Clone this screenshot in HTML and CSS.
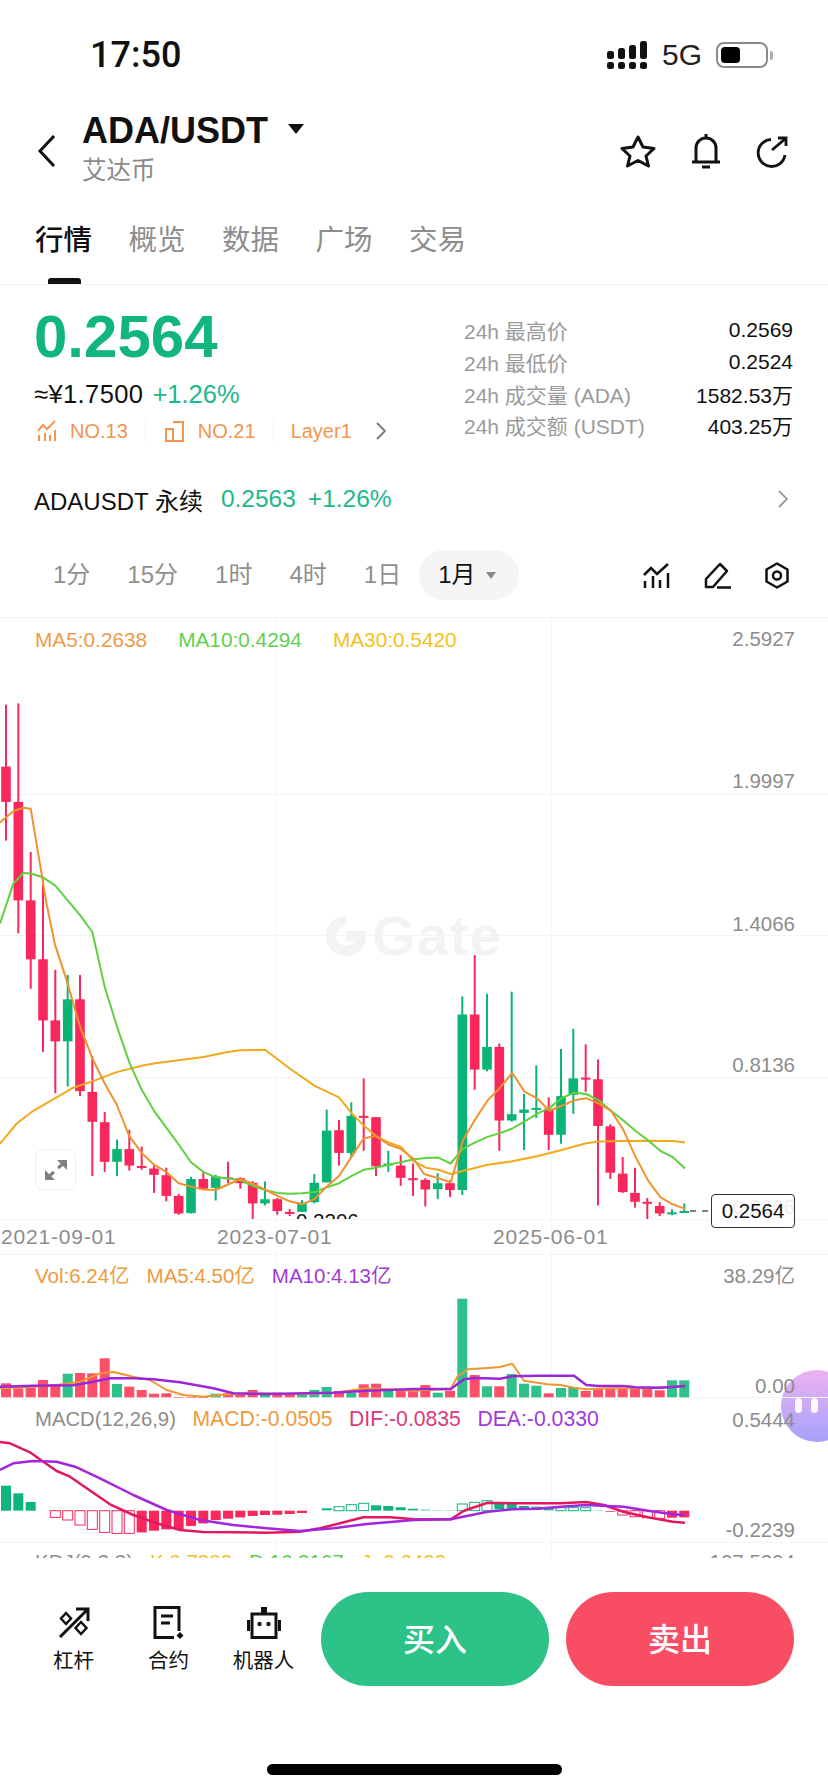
FILE: index.html
```html
<!DOCTYPE html>
<html lang="zh-CN">
<head>
    <meta charset="UTF-8">
    <meta name="viewport" content="width=device-width, initial-scale=1.0">
    <title>ADA/USDT</title>
    <link rel="stylesheet" href="styles.css">
</head>
<body>
    <div id="app">
        <div class="status">
            <span class="time">17:50</span>
            <div class="status-right">
                <svg class="signal" width="41" height="28" viewBox="0 0 41 28">
                    <rect x="0" y="21" width="7" height="7" rx="2.5"/><rect x="11" y="21" width="7" height="7" rx="2.5"/>
                    <rect x="22" y="21" width="7" height="7" rx="2.5"/><rect x="33" y="21" width="7" height="7" rx="2.5"/>
                    <rect x="0" y="10" width="7" height="8" rx="2.5"/><rect x="11" y="7" width="7" height="11" rx="2.5"/>
                    <rect x="22" y="4" width="7" height="14" rx="2.5"/><rect x="33" y="0" width="7" height="18" rx="2.5"/>
                </svg>
                <span class="net">5G</span>
                <div class="battery"><div class="battery-fill"></div></div>
                <div class="battery-nub"></div>
            </div>
        </div>

        <div class="header">
            <svg class="back" width="19" height="32" viewBox="0 0 19 32"><path d="M17 1 L3 16 L17 31" fill="none" stroke="#111" stroke-width="3"/></svg>
            <div class="title-block">
                <div class="pair"><h1>ADA/USDT</h1><span class="caret"></span></div>
                <div class="coin">艾达币</div>
            </div>
            <div class="header-icons">
                <svg width="36" height="34" viewBox="0 0 36 34"><path d="M18 3 L23 13 L34 14.500 L26 22 L28.500 32 L18 26.500 L7.500 32 L10 22 L2 14.500 L13 13 Z" fill="none" stroke="#111" stroke-width="3" stroke-linejoin="round"/></svg>
                <svg width="30" height="36" viewBox="0 0 30 36"><path d="M15 1 V5 M5 28 V15 A10 10 0 0 1 25 15 V28 M1 29 H29 M11 34 H19" fill="none" stroke="#111" stroke-width="3"/></svg>
                <svg class="share" width="32" height="32" viewBox="0 0 32 32"><path d="M15 3.500 A13.500 13.500 0 1 0 29 19 M16 14 L29 3 M22 2 H30 V10" fill="none" stroke="#111" stroke-width="2.800"/></svg>
            </div>
        </div>

        <div class="tabs">
            <span class="tab active">行情</span>
            <span class="tab">概览</span>
            <span class="tab">数据</span>
            <span class="tab">广场</span>
            <span class="tab">交易</span>
        </div>

        <div class="quote">
            <div class="quote-left">
                <div class="price">0.2564</div>
                <div class="sub-price"><span class="cny">≈¥1.7500</span><span class="up">+1.26%</span></div>
                <div class="ranks">
                    <svg width="20" height="22" viewBox="0 0 20 22"><path d="M1 11 L6 5 L10 9 L18 1 M2 15 V21 M8 13 V21 M13 15 V21 M18 10 V21" fill="none" stroke="#f2954e" stroke-width="2"/></svg>
                    <span>NO.13</span>
                    <i class="rank-sep"></i>
                    <svg width="21" height="22" viewBox="0 0 21 22"><path d="M2 9 H9 V21 H2 Z M9 2 H19 V21 H9" fill="none" stroke="#f2954e" stroke-width="2"/></svg>
                    <span>NO.21</span>
                    <i class="rank-sep"></i>
                    <span class="layer">Layer1</span>
                    <svg class="rank-more" width="10" height="18" viewBox="0 0 10 18"><path d="M1 1 L9 9 L1 17" fill="none" stroke="#777" stroke-width="1.800"/></svg>
                </div>
            </div>
            <div class="stats">
                <div class="stat"><span>24h 最高价</span><b>0.2569</b></div>
                <div class="stat"><span>24h 最低价</span><b>0.2524</b></div>
                <div class="stat"><span>24h 成交量 (ADA)</span><b>1582.53万</b></div>
                <div class="stat"><span>24h 成交额 (USDT)</span><b>403.25万</b></div>
            </div>
        </div>

        <div class="perp">
            <span class="perp-name">ADAUSDT 永续</span>
            <span class="perp-num">0.2563</span>
            <span class="perp-num">+1.26%</span>
            <svg class="perp-more" width="10" height="18" viewBox="0 0 10 18"><path d="M1 1 L9 9 L1 17" fill="none" stroke="#999" stroke-width="1.800"/></svg>
        </div>

        <div class="ranges">
            <span>1分</span>
            <span>15分</span>
            <span>1时</span>
            <span>4时</span>
            <span>1日</span>
            <span class="range-on">1月<i class="range-caret"></i></span>
            <div class="tools">
                <svg width="27" height="25" viewBox="0 0 27 25"><path d="M1 12 L8 5 L14 11 L25 1 M2 18 V25 M10 13 V25 M17 17 V25 M25 10 V25" fill="none" stroke="#111" stroke-width="2.500"/></svg>
                <svg width="27" height="27" viewBox="0 0 27 27"><path d="M2 25 V17 L16 2 L23 9 L9 25 Z M13 25.500 H27" fill="none" stroke="#111" stroke-width="2.500" stroke-linejoin="round"/></svg>
                <svg width="24" height="27" viewBox="0 0 24 27"><path d="M12 1.500 L22.500 7.500 V19.500 L12 25.500 L1.500 19.500 V7.500 Z" fill="none" stroke="#111" stroke-width="2.500" stroke-linejoin="round"/><circle cx="12" cy="13.500" r="4" fill="none" stroke="#111" stroke-width="2.500"/></svg>
            </div>
        </div>

        <div class="chart">
            <div class="bubble"><i></i><i></i></div>
            <svg id="plot" width="828" height="941" viewBox="0 617 828 941"></svg>

            <div class="panel panel-main">
                <div class="legend">
                    <span class="c-orange">MA5:0.2638</span>
                    <span class="c-green">MA10:0.4294</span>
                    <span class="c-yellow">MA30:0.5420</span>
                </div>
                <div class="logo-mark">
                    <svg width="40" height="40" viewBox="0 0 40 40"><path d="M20 5 A15 15 0 1 0 35 20 H20" fill="none" stroke="#f2f3f5" stroke-width="10"/></svg>
                    <span>Gate</span>
                </div>
                <div class="expand">
                    <svg width="24" height="22" viewBox="0 0 24 22"><path d="M3 19 L10 13 M21 3 L14 9" stroke="#808080" stroke-width="3"/><path d="M1 11 V21 H11 Z M23 11 V1 H13 Z" fill="#808080"/></svg>
                </div>
                <div class="last-price">0.2564</div>
            </div>

            <div class="panel panel-vol">
                <div class="legend small">
                    <span class="c-orange2">Vol:6.24亿</span>
                    <span class="c-orange2">MA5:4.50亿</span>
                    <span class="c-purple">MA10:4.13亿</span>
                </div>
            </div>

            <div class="panel panel-macd">
                <div class="legend small macd">
                    <span class="c-grey">MACD(12,26,9)</span>
                    <span class="c-orange2">MACD:-0.0505</span>
                    <span class="c-pink">DIF:-0.0835</span>
                    <span class="c-purple">DEA:-0.0330</span>
                </div>
            </div>

            <div class="panel panel-kdj">
                <div class="legend small">
                    <span class="c-grey">KDJ(9,3,3)</span>
                    <span class="c-yellow">K:0.7382</span>
                    <span class="c-green">D:16.3167</span>
                    <span class="c-yellow">J:-9.6423</span>
                </div>
            </div>
        </div>

        <div class="trade">
            <div class="trade-row">
                <div class="trade-item">
                    <svg width="34" height="33" viewBox="0 0 34 33"><path d="M3 31 L31 3 M19 3 H31 V15" fill="none" stroke="#111" stroke-width="3"/><path d="M9 7 L14 12.500 L9 18 L4 12.500 Z M24 16 L29.500 22 L24 28 L18.500 22 Z" fill="none" stroke="#111" stroke-width="2.500"/></svg>
                    <span>杠杆</span>
                </div>
                <div class="trade-item">
                    <svg width="34" height="33" viewBox="0 0 34 33"><path d="M27 25 V1.500 H3 V31.500 H22 M9 10 H21 M9 17 H18" fill="none" stroke="#111" stroke-width="3"/><path d="M28 26 L31.500 29.500 L28 33 L24.500 29.500 Z" fill="#111"/></svg>
                    <span>合约</span>
                </div>
                <div class="trade-item">
                    <svg width="36" height="33" viewBox="0 0 36 33"><path d="M6 8 H30 V31.500 H6 Z" fill="none" stroke="#111" stroke-width="3"/><path d="M15 1 H21 V7 H15 Z M1 14 H4 V25 H1 Z M32 14 H35 V25 H32 Z" fill="#111"/><circle cx="13.500" cy="18" r="2.200" fill="#111"/><circle cx="22.500" cy="18" r="2.200" fill="#111"/></svg>
                    <span>机器人</span>
                </div>
                <button class="btn buy">买入</button>
                <button class="btn sell">卖出</button>
            </div>
            <div class="home-bar"></div>
        </div>
    </div>
    <script src="chart.js"></script>
</body>
</html>
```

FILE: styles.css
```css
* {
    box-sizing: border-box;
}
body {
    margin: 0;
    background: #fff;
    font-family: "Liberation Sans", "Noto Sans CJK SC", sans-serif;
    color: #111;
}
#app {
    width: 828px;
    height: 1792px;
    overflow: hidden;
}

/* status bar */
.status {
    height: 110px;
    padding: 0 55px 0 90px;
    display: flex;
    align-items: center;
    justify-content: space-between;
}
.time {
    font-family: Roboto, sans-serif;
    font-size: 36px;
    font-weight: 500;
}
.status-right {
    display: flex;
    align-items: center;
}
.signal {
    fill: #111;
}
.net {
    font-size: 30px;
    margin-left: 14px;
    color: #222;
}
.battery {
    width: 52px;
    height: 26px;
    margin-left: 14px;
    padding: 3px;
    border: 2px solid #8a8a8a;
    border-radius: 8px;
}
.battery-fill {
    width: 19px;
    height: 100%;
    background: #000;
    border-radius: 4px;
}
.battery-nub {
    width: 3px;
    height: 9px;
    margin-left: 2px;
    background: #aaa;
    border-radius: 0 3px 3px 0;
}

/* header */
.header {
    height: 76px;
    padding: 0 40px 0 37px;
    display: flex;
    align-items: center;
}
.back {
    margin: 6px 26px 0 0;
}
.title-block {
    padding-top: 4px;
}
.pair {
    display: flex;
    align-items: center;
    height: 40px;
}
.pair h1 {
    margin: 0;
    font-size: 36px;
    font-weight: 700;
}
.caret {
    width: 0;
    height: 0;
    margin: 0 0 5px 20px;
    border-left: 8px solid transparent;
    border-right: 8px solid transparent;
    border-top: 10px solid #111;
}
.coin {
    margin-top: 2px;
    font-size: 24.500px;
    line-height: 36px;
    color: #8a8a8a;
}
.header-icons {
    margin: 6px 0 0 auto;
    display: flex;
    align-items: center;
    gap: 35px;
}
.share {
    margin-top: 1px;
}

/* tabs */
.tabs {
    height: 99px;
    padding: 39px 0 0 35px;
    display: flex;
    gap: 36.500px;
    border-bottom: 1px solid #f0f0f0;
}
.tab {
    position: relative;
    height: 59px;
    font-size: 28.500px;
    line-height: 30px;
    color: #8d8d8d;
}
.tab.active {
    color: #111;
    font-weight: 500;
}
.tab.active::after {
    content: "";
    position: absolute;
    left: 12.500px;
    bottom: 0;
    width: 33px;
    height: 6px;
    background: #111;
    border-radius: 3px 3px 0 0;
}

/* price block */
.quote {
    height: 183px;
    padding: 0 35px 0 34px;
    display: flex;
    justify-content: space-between;
}
.price {
    margin-top: 22px;
    font-size: 60px;
    line-height: 60px;
    font-weight: 700;
    color: #10b57f;
}
.sub-price {
    margin-top: 12px;
    display: flex;
    gap: 9px;
    font-size: 25.500px;
    line-height: 30px;
}
.cny {
    letter-spacing: 0.400px;
}
.up {
    color: #1db988;
}
.ranks {
    margin-top: 10px;
    height: 24px;
    display: flex;
    align-items: center;
    font-size: 20px;
    color: #f2954e;
}
.ranks svg {
    margin: 0 13px 0 3px;
}
.rank-sep {
    width: 1px;
    height: 24px;
    margin: 0 15px 0 17px;
    background: #f3f3f3;
}
.layer {
    margin-left: 2px;
}
.ranks .rank-more {
    margin: 0 0 0 24px;
}
.stats {
    width: 329px;
    padding-top: 29.500px;
}
.stat {
    height: 31.700px;
    display: flex;
    align-items: center;
    justify-content: space-between;
    font-size: 21px;
    color: #9a9a9a;
}
.stat b {
    font-weight: 400;
    color: #111;
}

/* perpetual row */
.perp {
    height: 62px;
    padding: 0 40px 0 34px;
    display: flex;
    align-items: center;
    font-size: 24.500px;
}
.perp-name {
    font-size: 24px;
    margin-right: 18px;
}
.perp-num {
    margin-right: 12px;
    color: #1db988;
}
.perp-more {
    margin-left: auto;
}

/* time ranges */
.ranges {
    height: 87px;
    padding: 20px 39px 0 53px;
    display: flex;
    align-items: flex-start;
    gap: 37px;
    font-size: 24px;
    line-height: 50px;
    color: #8f8f8f;
}
.range-on {
    display: flex;
    align-items: center;
    margin-left: -19px;
    width: 100px;
    height: 50px;
    padding-left: 19px;
    background: #f5f5f5;
    border-radius: 25px;
    color: #111;
}
.range-caret {
    width: 0;
    height: 0;
    margin-left: 10px;
    border-left: 5px solid transparent;
    border-right: 5px solid transparent;
    border-top: 7px solid #888;
}
.tools {
    margin-left: auto;
    height: 50px;
    display: flex;
    align-items: center;
    gap: 34px;
}

/* chart area */
.chart {
    position: relative;
    height: 941px;
    overflow: hidden;
    border-top: 1px solid #f2f2f2;
}
#plot {
    position: absolute;
    left: 0;
    top: -1px;
}
.panel {
    position: relative;
}
.panel-main {
    height: 636px;
}
.panel-vol {
    height: 143px;
}
.panel-macd {
    height: 145px;
}
.panel-kdj {
    margin-top: -2px;
}
.legend {
    padding: 10px 0 0 35px;
    display: flex;
    gap: 31px;
    font-size: 20.800px;
    line-height: 24px;
}
.legend.small {
    gap: 17px;
    font-size: 20.500px;
}
.legend.macd {
    font-size: 21.200px;
    gap: 16.500px;
}
.macd .c-grey {
    font-size: 20.300px;
}
.c-orange { color: #ef9a4a; }
.c-orange2 { color: #ee9a3e; }
.c-green { color: #5fd04e; }
.c-yellow { color: #f3c11d; }
.c-purple { color: #a03adb; }
.c-pink { color: #d93a7a; }
.c-grey { color: #8c8c8c; }

.logo-mark {
    position: absolute;
    left: 326px;
    top: 298px;
    display: flex;
    align-items: center;
    gap: 6px;
    font-size: 56px;
    letter-spacing: 1.500px;
    line-height: 40px;
    font-weight: 700;
    color: #f2f3f5;
}
.expand {
    position: absolute;
    left: 35px;
    top: 531px;
    width: 41px;
    height: 41px;
    display: flex;
    align-items: center;
    justify-content: center;
    background: #fff;
    border: 1px solid #f0f0f0;
    border-radius: 7px;
}
.last-price {
    position: absolute;
    left: 711px;
    top: 576px;
    width: 84px;
    height: 34px;
    background: rgba(255, 255, 255, 0.85);
    border: 1px solid #333;
    border-radius: 4px;
    font-size: 20.500px;
    line-height: 32px;
    text-align: center;
}
.bubble {
    position: absolute;
    left: 781px;
    top: 752px;
    width: 72px;
    height: 72px;
    padding: 28px 0 0 14px;
    display: flex;
    gap: 9px;
    border-radius: 50%;
    background: linear-gradient(#ecb2ef, #a6a2fb);
}
.bubble i {
    width: 7px;
    height: 15px;
    background: #fff;
    border-radius: 4px;
    opacity: 0.9;
}

/* svg text */
.axis {
    font-size: 20.500px;
    fill: #8c8c8c;
    text-anchor: end;
}
.date {
    font-size: 21px;
    letter-spacing: 0.800px;
    fill: #8c8c8c;
}
.low {
    font-size: 20.500px;
    fill: #111;
}

/* order bar */
.trade {
    height: 234px;
    position: relative;
    background: #fff;
    padding-top: 34px;
}
.trade-row {
    height: 94px;
    padding-left: 26px;
    display: flex;
}
.trade-item {
    width: 95px;
    padding-top: 14px;
    display: flex;
    flex-direction: column;
    align-items: center;
    gap: 9px;
    font-size: 20.500px;
    line-height: 26px;
}
.btn {
    width: 228px;
    height: 94px;
    padding: 0 0 4px;
    border: 0;
    border-radius: 47px;
    font-family: inherit;
    font-size: 32px;
    font-weight: 500;
    color: #fff;
}
.buy {
    margin-left: 10px;
    background: #2dc287;
}
.sell {
    margin-left: 17px;
    background: #f94d63;
}
.home-bar {
    width: 295px;
    height: 11px;
    margin: 78px auto 0;
    background: #000;
    border-radius: 6px;
}
```

FILE: chart.js
```js
const RED = "#f9275b";
const GREEN = "#0bb374";
const STEP = 37;

// candles: top of wick, bottom of wick, top of body, bottom of body, r/g
// units are thirds of a pixel across, 2.376 per pixel down, from y=610
const candles = [
    [225,548,372,456,"r"],[222,768,456,690,"r"],[575,900,690,830,"r"],[640,1050,830,975,"r"],
    [855,1148,975,1025,"r"],[867,1132,925,1025,"g"],[867,1155,925,1143,"r"],[1060,1345,1145,1216,"r"],
    [1193,1335,1217,1311,"r"],[1258,1345,1281,1311,"g"],[1235,1332,1281,1320,"r"],[1275,1330,1321,1325,"r"],
    [1320,1385,1327,1342,"r"],[1325,1405,1343,1392,"r"],[1387,1437,1392,1434,"r"],[1347,1434,1352,1433,"g"],
    [1335,1377,1352,1375,"r"],[1342,1403,1346,1373,"g"],[1311,1362,1348,1352,"r"],[1348,1375,1350,1362,"r"],
    [1357,1447,1361,1410,"r"],[1358,1415,1400,1410,"g"],[1397,1437,1400,1428,"r"],[1423,1440,1430,1433,"r"],
    [1402,1430,1408,1430,"g"],[1340,1410,1361,1407,"g"],[1187,1360,1237,1360,"g"],[1212,1320,1236,1290,"r"],
    [1170,1302,1202,1290,"g"],[1113,1285,1202,1205,"r"],[1205,1345,1205,1322,"r"],[1285,1335,1315,1320,"g"],
    [1295,1368,1320,1349,"r"],[1315,1392,1350,1353,"r"],[1350,1417,1354,1377,"r"],[1338,1400,1362,1376,"g"],
    [1355,1395,1362,1378,"r"],[918,1390,961,1378,"g"],[820,1140,961,1092,"r"],[912,1096,1038,1092,"g"],
    [1030,1285,1038,1213,"r"],[907,1216,1198,1213,"g"],[1150,1283,1187,1195,"g"],[1082,1207,1183,1186,"g"],
    [1158,1283,1185,1247,"r"],[1043,1268,1155,1247,"g"],[995,1197,1113,1152,"g"],[1032,1145,1111,1114,"r"],
    [1068,1415,1115,1226,"r"],[1222,1352,1227,1337,"r"],[1300,1385,1339,1383,"r"],[1325,1420,1385,1406,"r"],
    [1397,1447,1406,1410,"r"],[1407,1440,1416,1434,"r"],[1424,1438,1431,1433,"g"],[1410,1432,1428,1431,"g"]
];

const ma5 = [0,505,40,478,70,470,92,472,115,580,140,700,165,795,200,880,240,990,277,1065,314,1125,350,1175,388,1250,425,1290,462,1318,499,1335,536,1362,573,1370,610,1377,647,1378,684,1365,721,1352,758,1363,795,1377,832,1392,869,1405,906,1412,943,1400,980,1370,1017,1345,1054,1300,1091,1255,1128,1250,1165,1270,1202,1280,1242,1305,1272,1340,1315,1350,1352,1360,1389,1260,1426,1210,1463,1165,1500,1135,1537,1100,1574,1145,1611,1160,1648,1190,1685,1178,1722,1165,1759,1160,1796,1172,1833,1190,1870,1235,1907,1300,1944,1355,1981,1395,2018,1412,2055,1423];
const ma10 = [0,745,40,650,70,625,92,626,129,635,166,655,203,690,240,725,277,765,314,895,351,990,388,1075,425,1140,462,1190,499,1230,536,1270,573,1312,610,1335,647,1348,684,1350,721,1355,758,1368,795,1378,832,1385,869,1387,906,1386,943,1383,980,1372,1017,1362,1054,1345,1091,1330,1128,1325,1165,1318,1202,1312,1242,1305,1278,1302,1315,1301,1352,1315,1389,1280,1426,1265,1463,1252,1500,1243,1537,1232,1574,1215,1611,1197,1648,1183,1685,1160,1722,1147,1759,1150,1796,1165,1833,1190,1870,1213,1907,1238,1944,1260,1981,1285,2018,1300,2055,1327];
const ma30 = [0,1268,50,1220,100,1190,166,1160,220,1135,277,1120,350,1098,425,1083,470,1076,536,1070,610,1062,684,1050,721,1046,795,1045,870,1090,943,1130,1017,1158,1054,1195,1091,1225,1128,1250,1165,1265,1202,1275,1242,1310,1278,1325,1315,1330,1352,1340,1389,1333,1463,1318,1537,1310,1611,1298,1685,1283,1759,1267,1796,1263,1870,1262,1944,1261,2018,1262,2055,1265];

// volume tops, one per candle; the bars stand on y=472 (thirds of a pixel from y=1240)
const volumes = [430,445,442,420,433,401,399,400,355,432,440,450,461,460,471,471,471,461,460,462,450,458,458,463,461,450,441,453,458,433,431,452,452,452,435,458,452,176,405,439,439,402,431,437,460,444,441,453,445,445,445,447,445,451,421,421];
const volGreen = [5,9,17,21,24,25,26,28,31,35,37,39,41,42,43,45,46,54,55];
const volMa5 = [0,445,100,440,170,435,240,425,300,400,340,396,400,410,450,420,500,450,550,465,610,470,680,463,760,460,900,463,1000,458,1100,445,1242,452,1352,447,1372,410,1402,388,1463,384,1500,381,1537,371,1572,422,1642,433,1682,435,1722,443,1759,448,1833,445,1942,445,2055,438];
const volMa10 = [0,440,100,437,220,436,280,425,330,415,400,415,460,418,540,427,640,445,700,460,800,462,1000,458,1100,452,1242,447,1352,447,1392,418,1426,414,1500,416,1537,409,1611,407,1722,407,1759,435,1796,438,1870,438,1907,442,1981,443,2055,438];

// histogram around y=812: [index, top, bottom, colour, hollow]
const macdBars = [
    [0,737,812,"g"],[1,760,812,"g"],[2,786,812,"g"],
    [4,812,832,"r",1],[5,812,840,"r",1],[6,812,855,"r",1],[7,812,868,"r",1],[8,812,877,"r",1],[9,812,880,"r",1],[10,812,880,"r",1],
    [11,812,877,"r"],[12,812,872,"r"],[13,812,868,"r"],[14,812,868,"r"],[15,812,858,"r"],[16,812,850,"r"],[17,812,840,"r"],[18,812,836,"r"],
    [19,812,832,"r"],[20,812,828,"r"],[21,812,825,"r"],[22,812,824,"r"],[23,812,822,"r"],[24,812,819,"r"],
    [26,805,811,"g"],[27,800,812,"g",1],[28,794,812,"g",1],[29,790,812,"g",1],[30,796,812,"g"],[31,798,812,"g"],[32,802,811,"g"],[33,806,811,"g"],
    [34,809,811,"g"],[35,810,811,"g"],[36,810,811,"g"],
    [37,792,812,"g",1],[38,787,812,"g",1],[39,782,812,"g",1],[40,792,808,"g"],[41,792,806,"g"],[42,798,810,"g"],[43,800,810,"g"],[44,805,811,"g"],
    [45,803,812,"g",1],[46,803,812,"g",1],[47,803,812,"g",1],[48,810,811,"g"],[49,814,816,"r"],
    [50,812,825,"r",1],[51,812,830,"r",1],[52,812,833,"r",1],[53,812,835,"r",1],[54,812,833,"r"],[55,812,832,"r"]
];
const dif = [0,606,30,610,90,637,130,665,170,693,210,710,260,745,330,793,400,825,470,850,540,870,610,876,700,877,800,878,900,875,960,865,1020,850,1090,832,1170,832,1242,838,1352,838,1392,812,1463,788,1537,790,1611,790,1682,790,1759,786,1812,795,1870,815,1944,832,2018,845,2055,848];
const dea = [0,690,40,670,100,663,170,665,230,682,300,715,400,765,500,810,600,840,700,855,800,865,900,873,1000,865,1100,852,1242,840,1352,838,1463,815,1537,808,1611,806,1682,800,1759,795,1870,800,1944,812,2018,823,2055,825];

const mainX = x => (x / 3).toFixed(1);
const mainY = y => (610 + y / 2.376).toFixed(1);
const lowerY = y => (1240 + y / 3).toFixed(1);

function line(points, toY, color, width) {
    let d = "";
    for (let i = 0; i < points.length; i += 2) {
        d += (i ? "L" : "M") + mainX(points[i]) + " " + toY(points[i + 1]);
    }
    return `<path d="${d}" fill="none" stroke="${color}" stroke-width="${width}" stroke-linejoin="round"/>`;
}

function label(cls, x, y, text) {
    return `<text class="${cls}" x="${x}" y="${y}">${text}</text>`;
}

let out = "";

// grid
[794, 935, 1077, 1219, 1254, 1397, 1542].forEach(y => {
    out += `<rect x="0" y="${y}" width="828" height="1" fill="#f4f4f5"/>`;
});
[276, 551].forEach(x => {
    out += `<rect x="${x}" y="617" width="1" height="941" fill="#f6f6f7"/>`;
});

// main panel is cut at its bottom line
out += '<clipPath id="mainClip"><rect x="0" y="617" width="828" height="602"/></clipPath><g clip-path="url(#mainClip)">';
candles.forEach((c, i) => {
    const x = (18 + STEP * i) / 3;
    const color = c[4] === "r" ? RED : GREEN;
    const top = +mainY(c[2]);
    const h = Math.max(+mainY(c[3]) - top, 2);
    out += `<rect x="${(x - 1).toFixed(1)}" y="${mainY(c[0])}" width="2" height="${(+mainY(c[1]) - +mainY(c[0])).toFixed(1)}" fill="${color}"/>`;
    out += `<rect x="${(x - 4.8).toFixed(1)}" y="${top}" width="9.600" height="${h.toFixed(1)}" fill="${color}"/>`;
});
out += line(ma30, mainY, "#f2a91c", 2);
out += line(ma10, mainY, "#5ed13e", 2);
out += line(ma5, mainY, "#f0922e", 2);
out += label("low", 296, 1228, "0.2206");
out += "</g>";

// dashes out to the last price tag
out += '<path d="M690 1211 H708" stroke="#555" stroke-width="1.500" stroke-dasharray="6 6"/>';

// volume panel
volumes.forEach((top, i) => {
    const color = volGreen.includes(i) ? "#2fc18a" : "#fb5068";
    const h = Math.max((472 - top) / 3, 0.6);
    out += `<rect x="${((18 + STEP * i) / 3 - 5).toFixed(1)}" y="${lowerY(top)}" width="10" height="${h.toFixed(1)}" fill="${color}"/>`;
});
out += line(volMa5, lowerY, "#f0962e", 2);
out += line(volMa10, lowerY, "#9b27d9", 2.500);

// macd panel
macdBars.forEach(b => {
    const x = (18 + STEP * b[0]) / 3 - 5;
    const color = b[3] === "g" ? "#0fb47e" : "#f9275b";
    const y = lowerY(b[1]);
    const h = ((b[2] - b[1]) / 3).toFixed(1);
    if (b[4]) {
        out += `<rect x="${x.toFixed(1)}" y="${y}" width="10" height="${h}" fill="#fff" fill-opacity="0.6" stroke="${color}" stroke-width="1"/>`;
    } else {
        out += `<rect x="${x.toFixed(1)}" y="${y}" width="10" height="${h}" fill="${color}"/>`;
    }
});
out += line(dif, lowerY, "#e3195f", 2.500);
out += line(dea, lowerY, "#a326dc", 2.500);

// axes
out += label("axis", 795, 646, "2.5927");
out += label("axis", 795, 788, "1.9997");
out += label("axis", 795, 931, "1.4066");
out += label("axis", 795, 1072, "0.8136");
out += label("axis", 795, 1214, "0.2206");
out += label("axis", 795, 1283, "38.29亿");
out += label("axis", 795, 1393, "0.00");
out += label("axis", 795, 1427, "0.5444");
out += label("axis", 795, 1537, "-0.2239");
out += label("axis", 795, 1569, "107.5294");
out += label("date", 1, 1244, "2021-09-01");
out += label("date", 217, 1244, "2023-07-01");
out += label("date", 493, 1244, "2025-06-01");

document.getElementById("plot").innerHTML = out;
```
